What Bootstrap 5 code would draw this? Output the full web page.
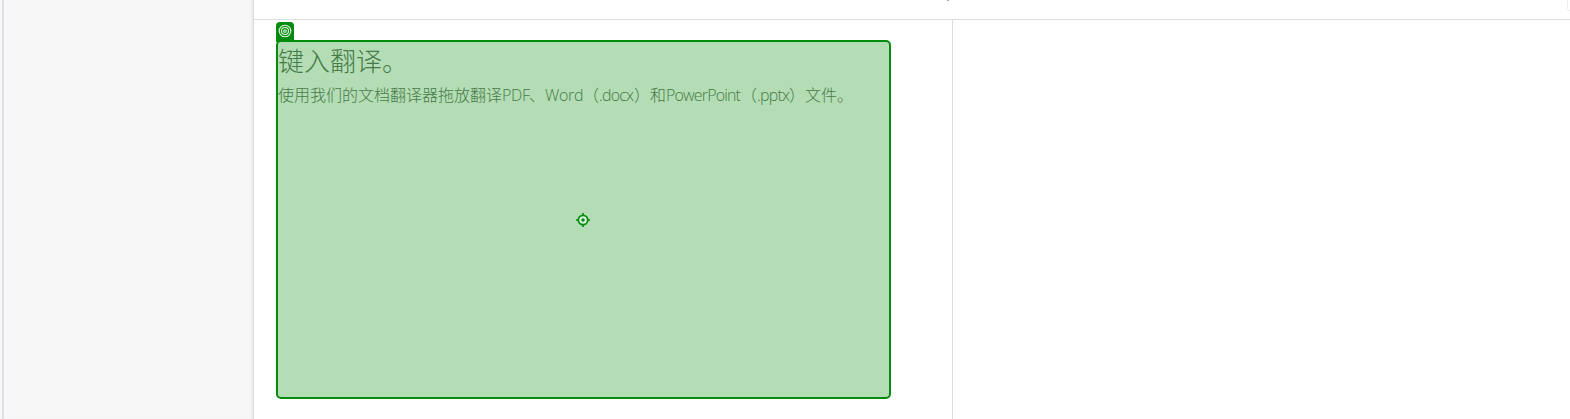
<!DOCTYPE html>
<html lang="zh-CN">
<head>
<meta charset="utf-8">
<meta name="viewport" content="width=device-width, initial-scale=1">
<title>翻译</title>
<link href="https://cdn.jsdelivr.net/npm/bootstrap@5.3.0/dist/css/bootstrap.min.css" rel="stylesheet">
<style>
body{font-family:"Open Sans","Noto Sans CJK SC",sans-serif;color:#333}
.side{width:254px;background:#f7f7f7;border-right:1px solid #dadae2;box-shadow:inset 2px 0 #f7f7f7,inset 4px 0 #dfdfe5,inset -3px 0 3px -2px #e5e5e8}
.topbar{height:20px;border-bottom:1px solid #dadee4}
.tail{left:693px;top:0;width:2px;height:1px;background:#aaa}
.corner{right:0;top:0;width:3px;height:11px;border-left:1px solid #eee;border-bottom:1px solid #eee;border-bottom-left-radius:3px}
.source{width:699px;border-right:1px solid #d9dfe7;padding:20px 0 0 22px}
.target{width:615px;height:359px;border:2px solid #058b0d;border-radius:5px;background:#b4ddb5}
.tag{left:-2px;top:-20px;width:18px;height:20px;background:#058b0d;border-radius:4px 4px 0 0}
.tag svg{display:block;margin:2px 0 0 2px}
.copy{color:#467a48;font-weight:300;white-space:nowrap}
.headline{font-size:26px;line-height:38px;font-weight:300}
.detail{font-size:16px;line-height:24px;margin-top:3px}
.run{display:inline-block;letter-spacing:-.3px}
.run-tight{letter-spacing:-.85px}
.center-mark{left:298px;top:171px}
</style>
</head>
<body class="overflow-hidden bg-white">
<div class="d-flex vh-100">
  <aside class="side flex-shrink-0"></aside>
  <main class="flex-grow-1 d-flex flex-column">
    <header class="topbar position-relative flex-shrink-0"><i class="tail position-absolute"></i><i class="corner position-absolute"></i></header>
    <div class="d-flex flex-grow-1">
      <section class="source flex-shrink-0">
        <div class="target position-relative">
          <span class="tag position-absolute"><svg width="14" height="14" viewBox="0 0 14 14" fill="none" stroke="#e5f5e5" stroke-width="1.1"><circle cx="7" cy="7" r="5.8"/><circle cx="7" cy="7" r="3.5"/><circle cx="7" cy="7" r="1.3"/></svg></span>
          <div class="copy">
            <h1 class="headline m-0">键入翻译。</h1>
            <p class="detail mb-0">使用我们的文档翻译器拖放翻译<span class="run" style="width:27px">PDF</span>、<span class="run" style="width:38px">Word</span>（<span class="run run-tight" style="width:35px">.docx</span>）和<span class="run run-tight" style="width:75px">PowerPoint</span>（<span class="run run-tight" style="width:32px">.pptx</span>）文件。</p>
          </div>
          <svg class="center-mark position-absolute" width="14" height="14" viewBox="0 0 14 14" fill="none"><circle cx="7" cy="7" r="4.7" fill="#d9f0d9" stroke="#058b0d" stroke-width="1.7"/><path d="M7 0v3M7 11v3M0 7h3M11 7h3" stroke="#058b0d" stroke-width="1.7"/><circle cx="7" cy="7" r="1.7" fill="#058b0d"/></svg>
        </div>
      </section>
      <section class="flex-grow-1"></section>
    </div>
  </main>
</div>
<script src="https://cdn.jsdelivr.net/npm/bootstrap@5.3.0/dist/js/bootstrap.bundle.min.js"></script>
</body>
</html>
